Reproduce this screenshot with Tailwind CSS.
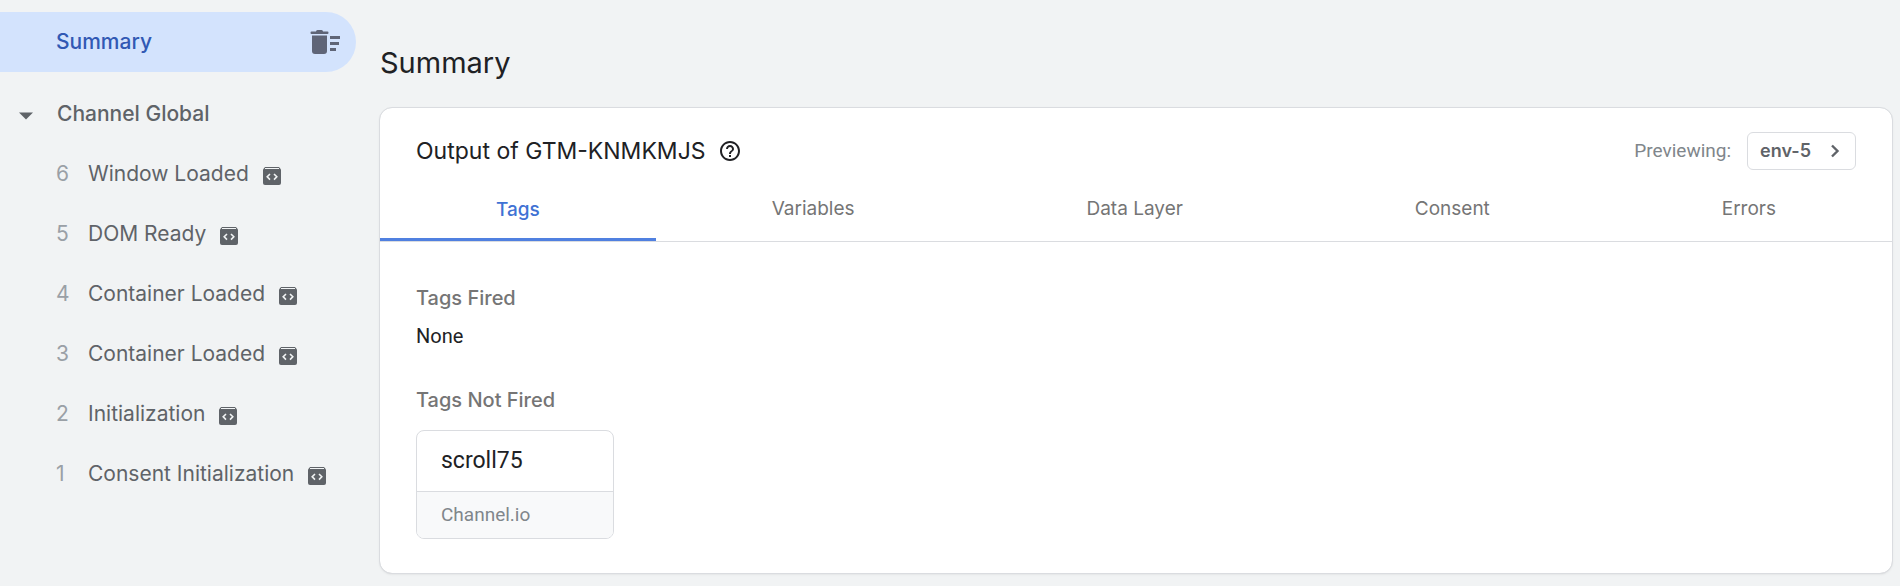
<!DOCTYPE html>
<html lang="en">

<head>
    <meta charset="UTF-8">
    <meta name="viewport" content="width=device-width, initial-scale=1.0">
    <script src="https://cdn.jsdelivr.net/npm/@tailwindcss/browser@4"></script>
    <title>Summary</title>
</head>

<body class="bg-[#f1f3f4] min-h-screen flex font-['Inter',sans-serif] text-[#202124]">
    <!-- shared icon for container events -->
    <svg class="hidden">
        <symbol id="eventIcon" viewBox="0 0 18 18">
            <path fill="#5f6368" d="M2 0h14l2 2.500V16a2 2 0 0 1-2 2H2a2 2 0 0 1-2-2V2.500z" />
            <path fill="#f1f3f4" d="M2 1h14v1H2z" />
            <path fill="none" stroke="#f1f3f4" stroke-width="1.600" d="M7 7L4.200 9.800L7 12.600M11 7l2.800 2.800L11 12.600" />
        </symbol>
    </svg>

    <!-- Sidebar -->
    <aside class="w-[380px] shrink-0 pt-3">
        <div class="w-[356px] h-[60px] pl-14 pr-4 flex items-center justify-between bg-[#d3e3fd] rounded-r-full">
            <a href="#" class="text-[21px] font-medium text-[#3159b4]">Summary</a>
            <button type="button" aria-label="Clear events">
                <svg class="w-8 h-8" viewBox="0 0 32 32" fill="#5f6577">
                    <path d="M8 5.500Q8 4 9.500 4h4Q15 4 15 5.500h4.500q1 0 1 1.250T19.500 8h-16q-1 0-1-1.250t1-1.250z" />
                    <path d="M4 9.500h15V25q0 3-3 3H7q-3 0-3-3z" />
                    <path d="M22 10h10v3H22zM22 16h9v3h-9zM22 22h6v3h-6z" />
                </svg>
            </button>
        </div>

        <nav class="mt-3 text-[21px] text-[#5f6368]">
            <button type="button" class="w-full h-[60px] pl-[19px] flex items-center gap-6 font-medium">
                <svg class="w-[14px] h-2 mt-1" viewBox="0 0 14 8" fill="#5f6368">
                    <path d="M0 0.500h14L7 7.500z" />
                </svg>
                Channel Global
            </button>
            <ul>
                <li><a href="#" class="h-[60px] pl-14 flex items-center"><span class="w-8 text-[#9aa0a6]">6</span>Window Loaded<svg class="w-[18px] h-[18px] ml-[14px] mt-1"><use href="#eventIcon" /></svg></a></li>
                <li><a href="#" class="h-[60px] pl-14 flex items-center"><span class="w-8 text-[#9aa0a6]">5</span>DOM Ready<svg class="w-[18px] h-[18px] ml-[14px] mt-1"><use href="#eventIcon" /></svg></a></li>
                <li><a href="#" class="h-[60px] pl-14 flex items-center"><span class="w-8 text-[#9aa0a6]">4</span>Container Loaded<svg class="w-[18px] h-[18px] ml-[14px] mt-1"><use href="#eventIcon" /></svg></a></li>
                <li><a href="#" class="h-[60px] pl-14 flex items-center"><span class="w-8 text-[#9aa0a6]">3</span>Container Loaded<svg class="w-[18px] h-[18px] ml-[14px] mt-1"><use href="#eventIcon" /></svg></a></li>
                <li><a href="#" class="h-[60px] pl-14 flex items-center"><span class="w-8 text-[#9aa0a6]">2</span>Initialization<svg class="w-[18px] h-[18px] ml-[14px] mt-1"><use href="#eventIcon" /></svg></a></li>
                <li><a href="#" class="h-[60px] pl-14 flex items-center"><span class="w-8 text-[#9aa0a6]">1</span>Consent Initialization<svg class="w-[18px] h-[18px] ml-[14px] mt-1"><use href="#eventIcon" /></svg></a></li>
            </ul>
        </nav>
    </aside>

    <main class="flex-1 pr-2 pb-3">
        <h1 class="pt-11 pb-[26px] text-[29px] leading-[38px]">Summary</h1>

        <section class="bg-white rounded-xl outline outline-[#dadce0] shadow-sm">
            <div class="pt-6 px-9 flex items-center justify-between">
                <div class="flex items-center gap-3">
                    <h2 class="text-[23px]">Output of GTM-KNMKMJS</h2>
                    <button type="button" aria-label="Help">
                        <svg class="w-6 h-6" viewBox="0 0 24 24" fill="#202124">
                            <path d="M11 18h2v-2h-2v2zm1-16C6.480 2 2 6.480 2 12s4.480 10 10 10 10-4.480 10-10S17.520 2 12 2zm0 18c-4.410 0-8-3.590-8-8s3.590-8 8-8 8 3.590 8 8-3.590 8-8 8zm0-14c-2.210 0-4 1.790-4 4h2c0-1.100.9-2 2-2s2 .9 2 2c0 2-3 1.750-3 5h2c0-2.250 3-2.500 3-5 0-2.210-1.790-4-4-4z" />
                        </svg>
                    </button>
                </div>
                <div class="flex items-center gap-4 text-lg">
                    <span class="font-['Roboto',sans-serif] text-[19px] text-[#80868b]">Previewing:</span>
                    <button type="button" class="h-[38px] px-3 flex items-center gap-4 border border-[#dadce0] rounded-md font-semibold text-[#5f6368]">
                        env-5
                        <svg class="w-4 h-4" viewBox="0 0 16 16" fill="none" stroke="#5f6368" stroke-width="2.400">
                            <path d="M5 2.500L10.500 8L5 13.500" />
                        </svg>
                    </button>
                </div>
            </div>

            <div role="tablist" class="h-[72px] flex border-b border-[#dadce0] text-[19px] text-[#757575]">
                <button type="button" role="tab" aria-selected="true" class="flex-auto pt-3 border-b-3 border-[#5080e0] font-medium text-[#3f72d4]">Tags</button>
                <button type="button" role="tab" class="flex-auto pt-2">Variables</button>
                <button type="button" role="tab" class="flex-auto pt-2">Data Layer</button>
                <button type="button" role="tab" class="flex-auto pt-2">Consent</button>
                <button type="button" role="tab" class="flex-auto pt-2">Errors</button>
            </div>

            <div class="pt-[42px] px-9 pb-[34px]">
                <h3 class="text-xl font-medium text-[#757575]">Tags Fired</h3>
                <p class="mt-[10px] font-['Roboto',sans-serif] text-xl">None</p>

                <h3 class="mt-9 text-xl font-medium text-[#757575]">Tags Not Fired</h3>
                <a href="#" class="mt-4 block w-[198px] border border-[#dadce0] rounded-lg overflow-hidden font-['Roboto',sans-serif]">
                    <div class="h-[60px] px-6 flex items-center text-[23px]">scroll75</div>
                    <div class="h-[47px] px-6 flex items-center border-t border-[#dadce0] bg-[#f8f9fa] text-[19px] text-[#80868b]">Channel.io</div>
                </a>
            </div>
        </section>
    </main>
</body>

</html>
